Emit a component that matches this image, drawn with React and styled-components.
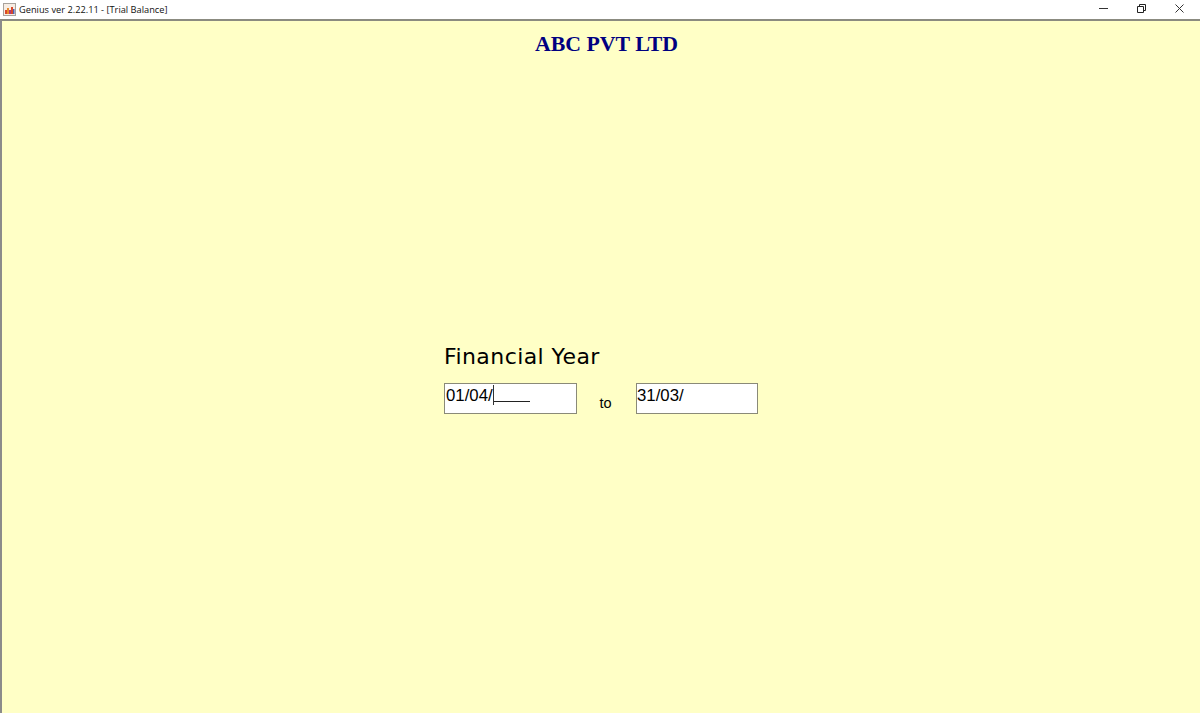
import styled, { createGlobalStyle } from "styled-components";

const GlobalStyle = createGlobalStyle`
  html, body {
    margin: 0;
    padding: 0;
    background: #ffffff;
  }
`;

const Window = styled.div`
  width: 1200px;
  height: 713px;
  display: flex;
  flex-direction: column;
  overflow: hidden;
`;

const TitleBar = styled.div`
  height: 19px;
  flex: none;
  display: flex;
  align-items: center;
  background: #ffffff;
  padding-left: 3px;
`;

const AppIcon = styled.svg`
  width: 13px;
  height: 13px;
  flex: none;
  margin-right: 3px;
`;

const TitleText = styled.span`
  font-family: "Open Sans", "Noto Sans", sans-serif;
  font-size: 9.25px;
  color: #111111;
  white-space: nowrap;
`;

const WindowControls = styled.div`
  margin-left: auto;
  padding-right: 2px;
  display: flex;
  height: 100%;
`;

const ControlButton = styled.div`
  width: 38px;
  height: 17px;
  display: flex;
  align-items: center;
  justify-content: center;
`;

const Client = styled.main`
  flex: 1;
  background: #ffffc6;
  border-top: 2px solid #8b8b80;
  border-left: 2px solid #8b8b8b;
  display: flex;
  flex-direction: column;
  align-items: center;
`;

const Company = styled.h1`
  margin: 11px 0 0 11px;
  font-family: "Liberation Serif", serif;
  font-weight: bold;
  font-size: 21.8px;
  line-height: 24px;
  color: #000080;
`;

const YearForm = styled.form`
  margin-top: 288px;
  width: 314px;
`;

const YearLabel = styled.div`
  font-family: "DejaVu Sans", sans-serif;
  font-size: 22px;
  line-height: 26px;
  letter-spacing: 0.42px;
  color: #000000;
`;

const DateRow = styled.div`
  margin-top: 13px;
  display: flex;
`;

const DateBox = styled.div`
  box-sizing: border-box;
  width: ${(p) => p.$width}px;
  height: 31px;
  background: #ffffff;
  border: 1px solid #8a8a78;
  padding: 1px 0 0 ${(p) => p.$inset}px;
  display: flex;
  align-items: flex-start;
  font-family: "Liberation Sans", sans-serif;
  font-size: 16.8px;
  line-height: 21px;
  color: #000000;
`;

const Caret = styled.span`
  width: 1px;
  height: 20px;
  background: #333333;
  flex: none;
`;

const Mask = styled.span`
  width: 36px;
  height: 16px;
  border-bottom: 1px solid #222222;
  flex: none;
`;

const ToLabel = styled.span`
  box-sizing: border-box;
  width: 59px;
  padding: 12px 2px 0 0;
  text-align: center;
  font-family: "Liberation Sans", sans-serif;
  font-size: 14.5px;
  line-height: 17px;
  color: #000000;
`;

export default function App() {
  return (
    <>
      <GlobalStyle />
      <Window>
        <TitleBar>
          <AppIcon viewBox="0 0 13 13">
            <rect x="0.5" y="0.5" width="12" height="12" fill="#f7ede4" stroke="#a8a29c" />
            <rect x="2" y="7" width="2" height="4" fill="#d9472b" />
            <rect x="4" y="5" width="2" height="6" fill="#e98a2c" />
            <rect x="6" y="7" width="2" height="4" fill="#b23a7a" />
            <rect x="8" y="4" width="2" height="7" fill="#d9472b" />
            <rect x="10" y="6" width="1.5" height="5" fill="#4a62b5" />
          </AppIcon>
          <TitleText>Genius ver 2.22.11 - [Trial Balance]</TitleText>
          <WindowControls>
            <ControlButton>
              <svg width="9" height="9" viewBox="0 0 9 9">
                <path d="M0 4.5h9" stroke="#333" fill="none" />
              </svg>
            </ControlButton>
            <ControlButton>
              <svg width="9" height="9" viewBox="0 0 9 9">
                <path d="M0.5 2.5h6v6h-6zM2.5 2.5v-2h6v6h-2" stroke="#222" fill="none" />
              </svg>
            </ControlButton>
            <ControlButton>
              <svg width="9" height="9" viewBox="0 0 9 9">
                <path d="M0.5 0.5l8 8M8.5 0.5l-8 8" stroke="#333" fill="none" />
              </svg>
            </ControlButton>
          </WindowControls>
        </TitleBar>
        <Client>
          <Company>ABC PVT LTD</Company>
          <YearForm>
            <YearLabel>Financial Year</YearLabel>
            <DateRow>
              <DateBox $width={133} $inset={1}>
                01/04/
                <Caret />
                <Mask />
              </DateBox>
              <ToLabel>to</ToLabel>
              <DateBox $width={122} $inset={0}>31/03/</DateBox>
            </DateRow>
          </YearForm>
        </Client>
      </Window>
    </>
  );
}
